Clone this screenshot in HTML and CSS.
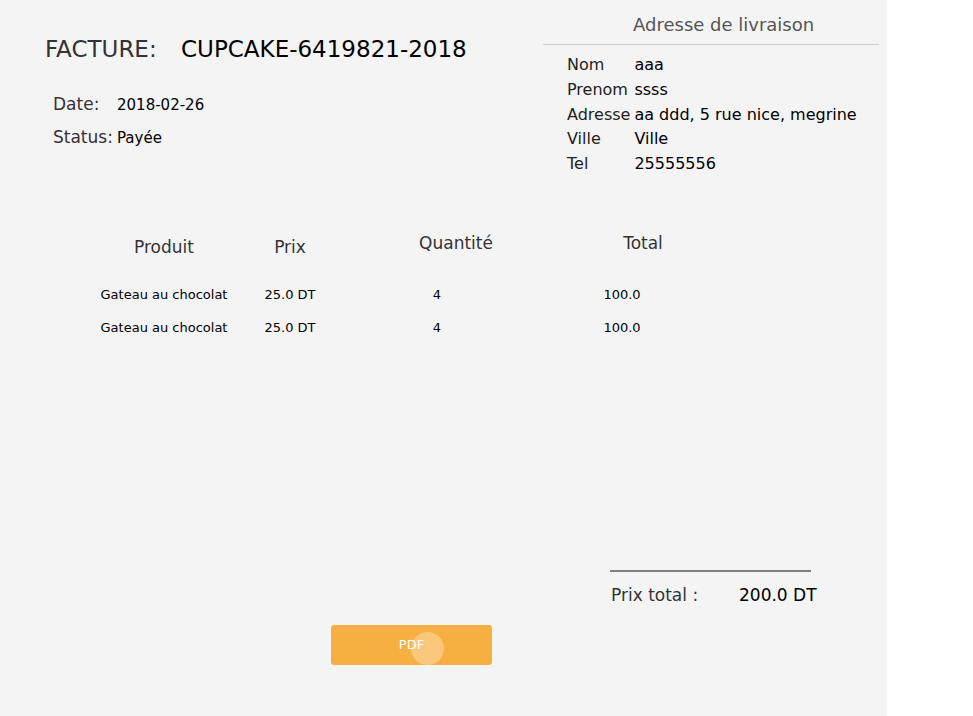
FILE: index.html
```html
<!DOCTYPE html>
<html lang="fr">
<head>
<meta charset="utf-8">
<title>Facture</title>
<link rel="stylesheet" href="styles.css">
</head>
<body>
<div class="panel">
  <div class="top">
    <div class="left">
      <div class="title"><span class="title-label">FACTURE:</span><span class="title-value">CUPCAKE-6419821-2018</span></div>
      <div class="meta">
        <div class="meta-row"><span class="meta-label">Date:</span><span class="meta-value">2018-02-26</span></div>
        <div class="meta-row"><span class="meta-label">Status:</span><span class="meta-value">Payée</span></div>
      </div>
    </div>
    <div class="right">
      <div class="addr-head">Adresse de livraison</div>
      <div class="addr">
        <span class="addr-label">Nom</span><span class="addr-value">aaa</span>
        <span class="addr-label">Prenom</span><span class="addr-value">ssss</span>
        <span class="addr-label">Adresse</span><span class="addr-value">aa ddd, 5 rue nice, megrine</span>
        <span class="addr-label">Ville</span><span class="addr-value">Ville</span>
        <span class="addr-label">Tel</span><span class="addr-value">25555556</span>
      </div>
    </div>
  </div>

  <div class="table">
    <div class="th th-low">Produit</div>
    <div class="th th-low">Prix</div>
    <div class="th th-qty">Quantité</div>
    <div class="th th-tot">Total</div>

    <div class="td">Gateau au chocolat</div>
    <div class="td">25.0 DT</div>
    <div class="td">4</div>
    <div class="td td-tot">100.0</div>

    <div class="td">Gateau au chocolat</div>
    <div class="td">25.0 DT</div>
    <div class="td">4</div>
    <div class="td td-tot">100.0</div>
  </div>

  <div class="summary">
    <div class="sum-row"><span class="sum-label">Prix total :</span><span class="sum-value">200.0 DT</span></div>
  </div>

  <button class="pdf-btn" type="button">PDF<span class="ripple"></span></button>
</div>
</body>
</html>
```

FILE: styles.css
```css
* { box-sizing: border-box; }

html, body {
  margin: 0;
  padding: 0;
  background: #ffffff;
}

body {
  font-family: "DejaVu Sans", "Liberation Sans", sans-serif;
  color: #000;
}

.panel {
  width: 887px;
  height: 716px;
  background: #f4f4f4;
  display: flex;
  flex-direction: column;
}

.top {
  display: flex;
  justify-content: space-between;
}

.left {
  padding: 35px 0 0 45px;
}

.title {
  font-size: 23px;
  line-height: 28px;
  white-space: nowrap;
}

.title-label {
  display: inline-block;
  width: 136px;
  color: #333;
}

.title-value {
  color: #000;
}

.meta {
  margin: 25px 0 0 8px;
}

.meta-row {
  display: flex;
  align-items: baseline;
  line-height: 32px;
}

.meta-label {
  width: 64px;
  font-size: 17px;
  color: #3a3038;
}

.meta-value {
  font-size: 15px;
  color: #000;
}

.right {
  width: 336px;
  margin-right: 8px;
  padding-top: 14px;
}

.addr-head {
  font-size: 18px;
  line-height: 22px;
  color: #555;
  padding: 0 0 8px 90px;
  border-bottom: 1px solid #d0d0d0;
}

.addr {
  display: grid;
  grid-template-columns: auto 1fr;
  column-gap: 4px;
  margin-top: 8px;
  padding-left: 24px;
  font-size: 16px;
  line-height: 24.75px;
  white-space: nowrap;
}

.addr-label { color: #222; }
.addr-value { color: #000; }

.table {
  display: grid;
  grid-template-columns: 128px 124px 170px 200px;
  margin: 55px 0 0 100px;
  justify-items: center;
  align-items: start;
}

.th {
  font-size: 17px;
  line-height: 22px;
  color: #333;
  margin-bottom: 20px;
}

.th-low { padding-top: 4px; }
.th-qty { padding-left: 38px; }
.th-tot { padding-left: 42px; }

.td {
  font-size: 13px;
  line-height: 33px;
  color: #000;
  white-space: nowrap;
}

.td-tot { padding-top: 1px; line-height: 32px; }

.summary {
  margin: 226px 0 0 610px;
  width: 201px;
  border-top: 2px solid #808080;
}

.sum-row {
  display: flex;
  align-items: baseline;
  margin-top: 11px;
  line-height: 24px;
  font-size: 17px;
  white-space: nowrap;
}

.sum-label {
  flex: none;
  width: 129px;
  padding-left: 1px;
  color: #333;
}

.sum-value { flex: none; color: #000; }

.pdf-btn {
  position: relative;
  overflow: hidden;
  margin: 18px 0 0 331px;
  width: 161px;
  height: 40px;
  border: none;
  border-radius: 3px;
  background: #f6b042;
  color: #fff;
  font-family: "DejaVu Sans", sans-serif;
  font-size: 13px;
  line-height: 40px;
  padding: 0;
  text-align: center;
}

.ripple {
  position: absolute;
  left: 80px;
  top: 7px;
  width: 33px;
  height: 33px;
  border-radius: 50%;
  background: rgba(255, 255, 255, 0.3);
}
```
